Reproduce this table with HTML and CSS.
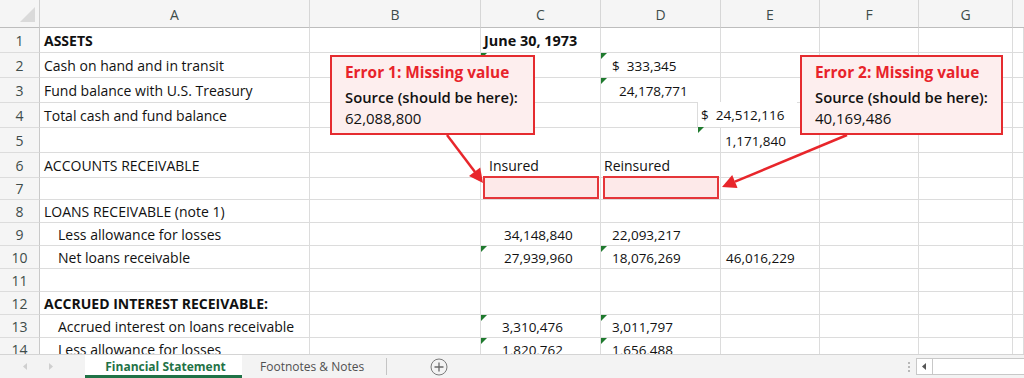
FILE: index.html
```html
<!DOCTYPE html>
<html>
<head>
<meta charset="utf-8">
<link rel="stylesheet" href="styles.css">
</head>
<body>
<div class="app">
  <div class="sheet">
    <div class="grid">
      <div class="corner"><span class="corner-tri"></span></div>
      <div class="hd">A</div><div class="hd">B</div><div class="hd">C</div><div class="hd">D</div><div class="hd">E</div><div class="hd">F</div><div class="hd">G</div><div class="hd last"></div>

      <div class="rn">1</div><div class="c b pa">ASSETS</div><div class="c"></div><div class="c b pc3 date">June 30, 1973</div><div class="c"></div><div class="c"></div><div class="c"></div><div class="c"></div><div class="c"></div>

      <div class="rn">2</div><div class="c pa">Cash on hand and in transit</div><div class="c"></div><div class="c tri"></div><div class="c n tri pd11">$&nbsp;&nbsp;333,345</div><div class="c"></div><div class="c"></div><div class="c"></div><div class="c"></div>

      <div class="rn">3</div><div class="c pa">Fund balance with U.S. Treasury</div><div class="c"></div><div class="c"></div><div class="c n tri pd18">24,178,771</div><div class="c"></div><div class="c"></div><div class="c"></div><div class="c"></div>

      <div class="rn">4</div><div class="c pa">Total cash and fund balance</div><div class="c"></div><div class="c"></div><div class="c"></div><div class="c n"><span class="spill">$&nbsp;&nbsp;24,512,116</span></div><div class="c"></div><div class="c"></div><div class="c"></div>

      <div class="rn">5</div><div class="c pa"></div><div class="c"></div><div class="c"></div><div class="c"></div><div class="c n pe5"><span class="tri-off"></span>1,171,840</div><div class="c"></div><div class="c"></div><div class="c"></div>

      <div class="rn">6</div><div class="c pa">ACCOUNTS RECEIVABLE</div><div class="c"></div><div class="c pc8">Insured</div><div class="c pd3">Reinsured</div><div class="c"></div><div class="c"></div><div class="c"></div><div class="c"></div>

      <div class="rn">7</div><div class="c"></div><div class="c"></div><div class="c"><span class="missing"></span></div><div class="c"><span class="missing"></span></div><div class="c"></div><div class="c"></div><div class="c"></div><div class="c"></div>

      <div class="rn">8</div><div class="c pa">LOANS RECEIVABLE (note 1)</div><div class="c"></div><div class="c"></div><div class="c"></div><div class="c"></div><div class="c"></div><div class="c"></div><div class="c"></div>

      <div class="rn">9</div><div class="c ind">Less allowance for losses</div><div class="c"></div><div class="c n pc24">34,148,840</div><div class="c n pd11">22,093,217</div><div class="c"></div><div class="c"></div><div class="c"></div><div class="c"></div>

      <div class="rn">10</div><div class="c ind">Net loans receivable</div><div class="c"></div><div class="c n tri pc24">27,939,960</div><div class="c n tri pd11">18,076,269</div><div class="c n pe6">46,016,229</div><div class="c"></div><div class="c"></div><div class="c"></div>

      <div class="rn">11</div><div class="c"></div><div class="c"></div><div class="c"></div><div class="c"></div><div class="c"></div><div class="c"></div><div class="c"></div><div class="c"></div>

      <div class="rn">12</div><div class="c b pa">ACCRUED INTEREST RECEIVABLE:</div><div class="c"></div><div class="c"></div><div class="c"></div><div class="c"></div><div class="c"></div><div class="c"></div><div class="c"></div>

      <div class="rn">13</div><div class="c ind">Accrued interest on loans receivable</div><div class="c"></div><div class="c n tri pc22">3,310,476</div><div class="c n tri pd11">3,011,797</div><div class="c"></div><div class="c"></div><div class="c"></div><div class="c"></div>

      <div class="rn">14</div><div class="c ind">Less allowance for losses</div><div class="c"></div><div class="c n tri pc22">1,820,762</div><div class="c n tri pd11">1,656,488</div><div class="c"></div><div class="c"></div><div class="c"></div><div class="c"></div>
    </div>

    <div class="callout callout-1">
      <div class="co-title">Error 1: Missing value</div>
      <div class="co-label">Source (should be here):</div>
      <div class="co-value">62,088,800</div>
    </div>
    <div class="callout callout-2">
      <div class="co-title">Error 2: Missing value</div>
      <div class="co-label">Source (should be here):</div>
      <div class="co-value">40,169,486</div>
    </div>

    <svg class="arrows" width="1024" height="354" viewBox="0 0 1024 354">
      <line x1="447" y1="135" x2="475" y2="172" stroke="#e8262b" stroke-width="2.5"/>
      <polygon points="483,183 469,176 480.2,167.6" fill="#e8262b"/>
      <line x1="847" y1="135" x2="735" y2="181.6" stroke="#e8262b" stroke-width="2.5"/>
      <polygon points="722,187 732.2,175.1 737.6,188.1" fill="#e8262b"/>
    </svg>
  </div>

  <div class="tabbar">
    <div class="nav">
      <svg width="5" height="7" viewBox="0 0 5 7"><polygon points="4,0 4,7 0,3.5" fill="#cfcfcf"/></svg>
      <svg width="5" height="7" viewBox="0 0 5 7"><polygon points="1,0 1,7 5,3.5" fill="#cfcfcf"/></svg>
    </div>
    <div class="tab active">Financial Statement</div>
    <div class="tab">Footnotes &amp; Notes</div>
    <div class="tab-sep"></div>
    <div class="add">
      <svg width="18" height="18" viewBox="0 0 18 18"><circle cx="9" cy="9" r="8" fill="none" stroke="#7a7a7a" stroke-width="1"/><path d="M9 4.5v9M4.5 9h9" stroke="#6a6a6a" stroke-width="1.3"/></svg>
    </div>
    <div class="spacer"></div>
    <div class="dots"><span></span><span></span><span></span></div>
    <div class="hscroll">
      <div class="hs-btn"><svg width="5" height="7" viewBox="0 0 5 7"><polygon points="4,0 4,7 0,3.5" fill="#555"/></svg></div>
      <div class="hs-track"></div>
    </div>
  </div>
</div>
</body>
</html>
```

FILE: styles.css
```css
* { box-sizing: border-box; }
html, body { margin: 0; padding: 0; background: #fff; }
body {
  font-family: "Open Sans", Lato, sans-serif;
  font-size: 14px;
  color: #111;
}
.app { width: 1024px; height: 378px; overflow: hidden; display: flex; flex-direction: column; }

.sheet { position: relative; height: 354px; overflow: hidden; flex: none; }

.grid {
  display: grid;
  grid-template-columns: 40px 270px 171px 120px 120px 99px 99px 94px 11px;
  grid-template-rows: 28px repeat(6, 25px) 22px repeat(7, 23px);
}

.corner {
  position: relative;
  background: #f5f5f5;
  border-right: 1px solid #cfcfcf;
  border-bottom: 1px solid #bdbdbd;
}
.corner-tri {
  position: absolute;
  left: 20px; top: 7px;
  width: 0; height: 0;
  border-left: 15px solid transparent;
  border-bottom: 15px solid #dadada;
}

.hd {
  background: #f5f5f5;
  border-right: 1px solid #d6d6d6;
  border-bottom: 1px solid #bdbdbd;
  display: flex; align-items: center; justify-content: center;
  font-size: 14px;
  color: #3e4c4a;
  padding-top: 1px;
}
.hd.last { border-right: none; }

.rn {
  background: #f5f5f5;
  border-right: 1px solid #c9c9c9;
  border-bottom: 1px solid #dcdcdc;
  display: flex; align-items: center; justify-content: center;
  font-size: 14px;
  color: #3e4c4a;
}

.c {
  position: relative;
  border-right: 1px solid #dcdcdc;
  border-bottom: 1px solid #dcdcdc;
  display: flex; align-items: center;
  white-space: nowrap;
  padding-top: 1px;
  font-size: 14px;
}
.n { font-size: 13.5px; }
.b { font-weight: 700; }
.date { font-size: 14.4px; }
.pa { padding-left: 4px; }
.ind { padding-left: 18px; }
.pc3 { padding-left: 3px; }
.pc8 { padding-left: 8px; }
.pc22 { padding-left: 21px; }
.pc24 { padding-left: 23px; }
.pd3 { padding-left: 3px; }
.pd11 { padding-left: 11px; }
.pd18 { padding-left: 18px; }
.pe5 { padding-left: 4px; }
.pe6 { padding-left: 5px; }

.tri::before, .tri-off {
  content: "";
  position: absolute;
  top: 0; left: 0;
  width: 0; height: 0;
  border-top: 6px solid #1f7a2e;
  border-right: 6px solid transparent;
}
.tri-off { left: -23px; top: -1px; }

.spill {
  position: absolute;
  left: -24px; top: -1px; bottom: 0;
  width: 100px;
  background: #fff;
  border-left: 1px solid #dcdcdc;
  display: flex; align-items: center;
  padding-left: 3px;
  padding-top: 1px;
}

.missing {
  position: absolute;
  left: 2px; right: 1px; top: -2px; bottom: 0;
  background: #fde9e9;
  border: 2px solid #e5363a;
}

.callout {
  position: absolute;
  top: 55px;
  width: 205px;
  height: 80px;
  background: #fdeeee;
  border: 2.5px solid #e52b2f;
  padding: 4px 0 0 13px;
  display: flex; flex-direction: column;
  white-space: nowrap;
}
.callout-1 { left: 330px; }
.callout-2 { left: 800px; width: 203px; }
.co-title {
  color: #e8232a;
  font-weight: 700;
  font-size: 15.4px;
  line-height: 24px;
}
.co-label {
  color: #111;
  font-weight: 600;
  font-size: 14.8px;
  line-height: 24px;
}
.co-value {
  color: #111;
  font-size: 15px;
  line-height: 18px;
}

.arrows { position: absolute; left: 0; top: 0; pointer-events: none; }

.tabbar {
  height: 24px;
  flex: none;
  background: #f3f3f3;
  border-top: 1px solid #d4d4d4;
  display: flex; align-items: stretch;
  font-size: 12px;
  white-space: nowrap;
}
.nav {
  width: 85px;
  display: flex; align-items: center;
  gap: 20px;
  padding-left: 23px;
}
.tab {
  display: flex; align-items: center;
  padding: 0 18px;
  color: #505050;
}
.tab.active {
  width: 157px;
  padding: 3px 0 0 4px;
  justify-content: center;
  background: #fff;
  color: #1f7246;
  font-weight: 700;
  border-bottom: 3px solid #1f7246;
}
.tab-sep {
  width: 1px;
  margin: 3px 0 3px 4px;
  background: #c4c4c4;
}
.add {
  display: flex; align-items: center;
  padding-left: 43px;
}
.spacer { flex: 1; }
.dots {
  width: 4px;
  display: flex; flex-direction: column; justify-content: center; gap: 2px;
  margin-right: 4px;
}
.dots span { width: 2px; height: 2px; background: #b8b8b8; display: block; }
.hscroll {
  width: 108px;
  margin: 3px 0 3px 0;
  display: flex;
  background: #fff;
  border: 1px solid #c8c8c8;
  border-right: none;
}
.hs-btn {
  width: 16px;
  display: flex; align-items: center; justify-content: center;
  border-right: 1px solid #c8c8c8;
}
.hs-track { flex: 1; }
```
